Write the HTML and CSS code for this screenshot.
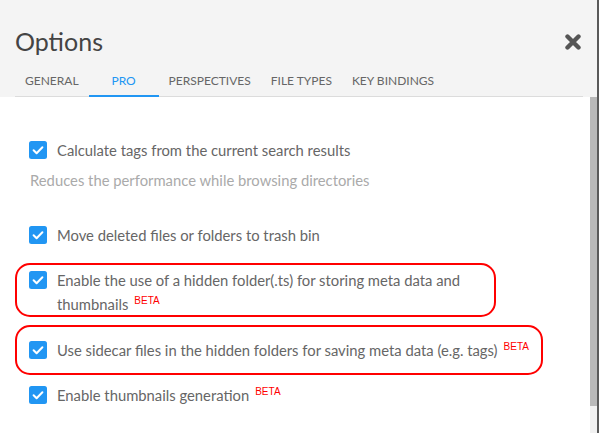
FILE: index.html
```html
<!DOCTYPE html>
<html>
<head>
<meta charset="utf-8">
<link rel="stylesheet" href="styles.css">
</head>
<body>
<div class="dialog">
  <div class="header">
    <div class="title-row">
      <h1 class="title">Options</h1>
      <svg class="close" width="16" height="16" viewBox="0 0 16 16"><path d="M2.5 2.5 L13.5 13.5 M13.5 2.5 L2.5 13.5" stroke="#555" stroke-width="4.4" stroke-linecap="round"/></svg>
    </div>
    <div class="tabs">
      <div class="tab">General</div>
      <div class="tab active">Pro</div>
      <div class="tab">Perspectives</div>
      <div class="tab">File Types</div>
      <div class="tab">Key Bindings</div>
    </div>
  </div>
  <div class="body">
    <div class="content">
      <label class="row r1">
        <svg class="cb" width="18" height="18" viewBox="0 0 18 18"><rect width="18" height="18" rx="2.5" fill="#2196f3"/><path d="M4.6 9.3 L7.6 12.2 L13.4 6.2" stroke="#fff" stroke-width="2" fill="none" stroke-linecap="round" stroke-linejoin="round"/></svg>
        <span class="label">Calculate tags from the current search results</span>
      </label>
      <div class="help">Reduces the performance while browsing directories</div>
      <label class="row r2">
        <svg class="cb" width="18" height="18" viewBox="0 0 18 18"><rect width="18" height="18" rx="2.5" fill="#2196f3"/><path d="M4.6 9.3 L7.6 12.2 L13.4 6.2" stroke="#fff" stroke-width="2" fill="none" stroke-linecap="round" stroke-linejoin="round"/></svg>
        <span class="label">Move deleted files or folders to trash bin</span>
      </label>
      <label class="row boxed box1">
        <svg class="cb" width="18" height="18" viewBox="0 0 18 18"><rect width="18" height="18" rx="2.5" fill="#2196f3"/><path d="M4.6 9.3 L7.6 12.2 L13.4 6.2" stroke="#fff" stroke-width="2" fill="none" stroke-linecap="round" stroke-linejoin="round"/></svg>
        <span class="label">Enable the use of a hidden folder(.ts) for storing meta data and thumbnails<sup class="beta">BETA</sup></span>
      </label>
      <label class="row boxed box2">
        <svg class="cb" width="18" height="18" viewBox="0 0 18 18"><rect width="18" height="18" rx="2.5" fill="#2196f3"/><path d="M4.6 9.3 L7.6 12.2 L13.4 6.2" stroke="#fff" stroke-width="2" fill="none" stroke-linecap="round" stroke-linejoin="round"/></svg>
        <span class="label">Use sidecar files in the hidden folders for saving meta data (e.g. tags)<sup class="beta">BETA</sup></span>
      </label>
      <label class="row r5">
        <svg class="cb" width="18" height="18" viewBox="0 0 18 18"><rect width="18" height="18" rx="2.5" fill="#2196f3"/><path d="M4.6 9.3 L7.6 12.2 L13.4 6.2" stroke="#fff" stroke-width="2" fill="none" stroke-linecap="round" stroke-linejoin="round"/></svg>
        <span class="label">Enable thumbnails generation<sup class="beta">BETA</sup></span>
      </label>
    </div>
    <div class="scrollbar">
      <div class="thumb"></div>
      <div class="track"></div>
    </div>
  </div>
</div>
</body>
</html>
```
FILE: styles.css
```css
html, body {
  margin: 0;
  padding: 0;
  background: #ffffff;
}
body {
  font-family: Lato, "Open Sans", sans-serif;
  color: #666;
}
.dialog {
  width: 597px;
  height: 433px;
  border-right: 2px solid #5a5a5a;
  display: flex;
  flex-direction: column;
  overflow: hidden;
}
.header {
  flex: none;
  background: #f4f4f4;
  padding: 24px 14px 0 15px;
}
.title-row {
  display: flex;
  align-items: center;
  justify-content: space-between;
  height: 34px;
}
.title {
  margin: 0;
  font-weight: 400;
  font-size: 25px;
  color: #444;
  line-height: 34px;
}
.close {
  margin-right: 2px;
  margin-top: 2px;
}
.tabs {
  display: flex;
  border-bottom: 1px solid #dcdcdc;
  height: 37px;
  margin-top: 1px;
}
.tab {
  min-width: 70px;
  padding: 12px 10px 0;
  box-sizing: border-box;
  text-align: center;
  text-transform: uppercase;
  font-size: 12px;
  line-height: 20px;
  color: #666;
  border-bottom: 2px solid transparent;
  margin-bottom: -1px;
  height: 38px;
}
.tab.active {
  color: #2196f3;
  border-bottom-color: #2196f3;
}
.body {
  flex: 1;
  display: flex;
  min-height: 0;
}
.content {
  flex: 1;
  padding: 41px 0 0 15px;
  font-size: 14.8px;
}
.row {
  display: flex;
  align-items: flex-start;
  line-height: 24px;
  box-sizing: border-box;
}
.cb {
  flex: none;
  margin: 3px 10px 0 14px;
}
.label {
  color: #666;
}
.help {
  margin: 6px 0 0 15px;
  line-height: 24px;
  color: #aaa;
}
.r2 {
  margin-top: 31px;
}
.boxed {
  border: 2px solid #ff0000;
  border-radius: 15px;
}
.boxed .cb {
  margin-left: 12px;
}
.box1 {
  width: 481px;
  margin-top: 16px;
  padding: 3px 20px 0 0;
  height: 54px;
}
.box2 {
  width: 528px;
  margin-top: 8px;
  padding: 11px 0 0 0;
  height: 50px;
}
.r5 {
  margin-top: 8px;
}
.beta {
  font-family: "Liberation Sans", Arial, sans-serif;
  font-size: 10px;
  line-height: 10px;
  color: #ff0000;
  margin-left: 6px;
  vertical-align: 6px;
}
.scrollbar {
  width: 7px;
  display: flex;
  flex-direction: column;
}
.thumb {
  height: 309px;
  background: #b9b9b9;
}
.track {
  flex: 1;
  background: #f1f1f1;
}
```
